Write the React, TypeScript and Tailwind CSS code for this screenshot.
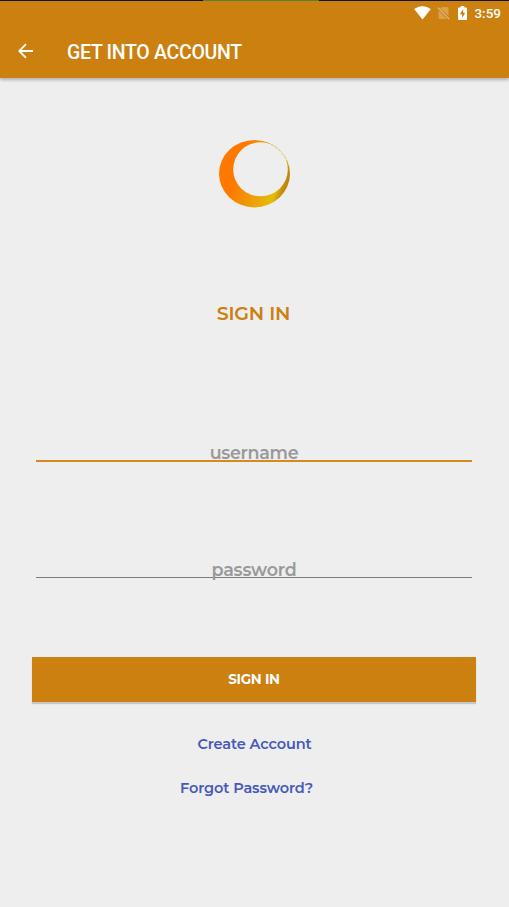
import type { ReactNode } from "react";

function StatusBar() {
  return (
    <div className="flex h-6 items-center justify-end pr-2 text-white">
      <svg className="mr-[6px] h-[14px] w-[17px]" viewBox="0 0 17 14" fill="currentColor">
        <path d="M8.5 13.5 0.2 3.1C2.5 1.2 5.4.2 8.5.2s6 1 8.3 2.9z" />
      </svg>
      <svg className="mr-[8px] h-[14px] w-[13px] opacity-40" viewBox="0 0 13 14">
        <path d="M4.8 1H10.3Q11.5 1 11.5 2V9.9L3.2 2.4zM1.5 4.6 9.8 13H2.5Q1.5 13 1.5 12z" fill="currentColor" opacity=".65" />
        <path d="M.7 1.6 12.3 13.2" stroke="currentColor" strokeWidth="1.4" />
      </svg>
      <svg className="mr-[7px] h-[14px] w-[9px]" viewBox="0 0 9 14">
        <path d="M2.7 0H6.3V1.4H8.2Q9 1.4 9 2.2V13.2Q9 14 8.2 14H.8Q0 14 0 13.2V2.2Q0 1.4.8 1.4H2.7z" fill="currentColor" />
        <path d="M5.2 3 1.8 8.3H4V12L7.3 6.8H5.2z" fill="#cb8010" />
      </svg>
      <span className="pt-px text-[13.5px] leading-none font-medium">3:59</span>
    </div>
  );
}

function Logo() {
  return (
    <svg className="h-[68px] w-[72px]" viewBox="0 0 72 68">
      <defs>
        <linearGradient id="ring" x1="0" y1="0.35" x2="1" y2="0.65">
          <stop offset="0" stopColor="#ff7800" />
          <stop offset="0.27" stopColor="#ff7900" />
          <stop offset="0.55" stopColor="#ee9b08" />
          <stop offset="0.84" stopColor="#e2bd08" />
          <stop offset="0.93" stopColor="#c58a0c" />
          <stop offset="1" stopColor="#bd7a0c" />
        </linearGradient>
      </defs>
      <ellipse cx="35.5" cy="33.7" rx="35.5" ry="33.7" fill="url(#ring)" />
      <ellipse cx="41.5" cy="29.3" rx="27.3" ry="27" fill="#eeeeee" />
      <path d="M53 5Q62 9 67.5 19L67 22Q61 11 53 5" fill="#eeeeee" />
      <path d="M52 4.5Q62 9.5 68 21" fill="none" stroke="#dfbd62" strokeWidth="0.9" strokeDasharray="3 1.5" />
    </svg>
  );
}

function Field({ children, active = false }: { children: ReactNode; active?: boolean }) {
  return (
    <div className={active
      ? "flex h-[22px] justify-center border-b-2 border-[#d58a20] text-[#999999]"
      : "flex h-[22px] justify-center border-b border-[#7d7d7d] text-[#999999]"}>
      {children}
    </div>
  );
}

export default function App() {
  return (
    <main className="flex h-[907px] w-[509px] flex-col bg-[#eeeeee] font-['Montserrat','Inter',sans-serif] font-semibold">
      <div className="flex h-px bg-[#101327]"><div className="ml-[203px] w-[116px] bg-[#568530]" /></div>
      <header className="h-[76.5px] shrink-0 bg-[#cb8010] font-['Roboto',sans-serif] shadow-[0_2px_3px_rgba(0,0,0,0.26)]">
        <StatusBar />
        <div className="flex h-[52px] items-center pl-[18px] text-white">
          <svg className="h-4 w-4" viewBox="0 0 16 16" fill="none" stroke="currentColor" strokeWidth="1.8">
            <path d="M15 8H2M8 1.2 1.2 8 8 14.8" />
          </svg>
          <h1 className="ml-[33px] pt-[3px] text-[19.5px] leading-none font-medium tracking-[-0.3px] whitespace-nowrap">GET INTO ACCOUNT</h1>
        </div>
      </header>
      <div className="mt-[62.5px] flex justify-center"><Logo /></div>
      <h2 className="mt-[96px] flex h-5 justify-center pr-[2px] text-[19px] leading-5 tracking-[-0.15px] text-[#cb8010]">SIGN IN</h2>
      <div className="mt-[116px] pr-[37px] pl-9">
        <Field active><span className="text-[17.5px] leading-[26px] tracking-[-0.3px]">username</span></Field>
        <div className="h-[94px]" />
        <Field><span className="text-[17.5px] leading-[28px] tracking-[-0.2px]">password</span></Field>
      </div>
      <button className="mr-[33px] ml-8 mt-[79px] h-[45px] shrink-0 bg-[#cb8010] text-[13.5px] font-bold tracking-[-0.3px] text-white shadow-[0_2px_1px_rgba(0,0,0,0.17)]">SIGN IN</button>
      <a className="mt-[32px] block h-5 text-center text-[14.5px] leading-5 tracking-[-0.1px] text-[#4658b8]">Create Account</a>
      <a className="mt-[24px] block h-5 pr-4 text-center text-[14.5px] leading-5 tracking-[-0.1px] text-[#4658b8]">Forgot Password?</a>
    </main>
  );
}
